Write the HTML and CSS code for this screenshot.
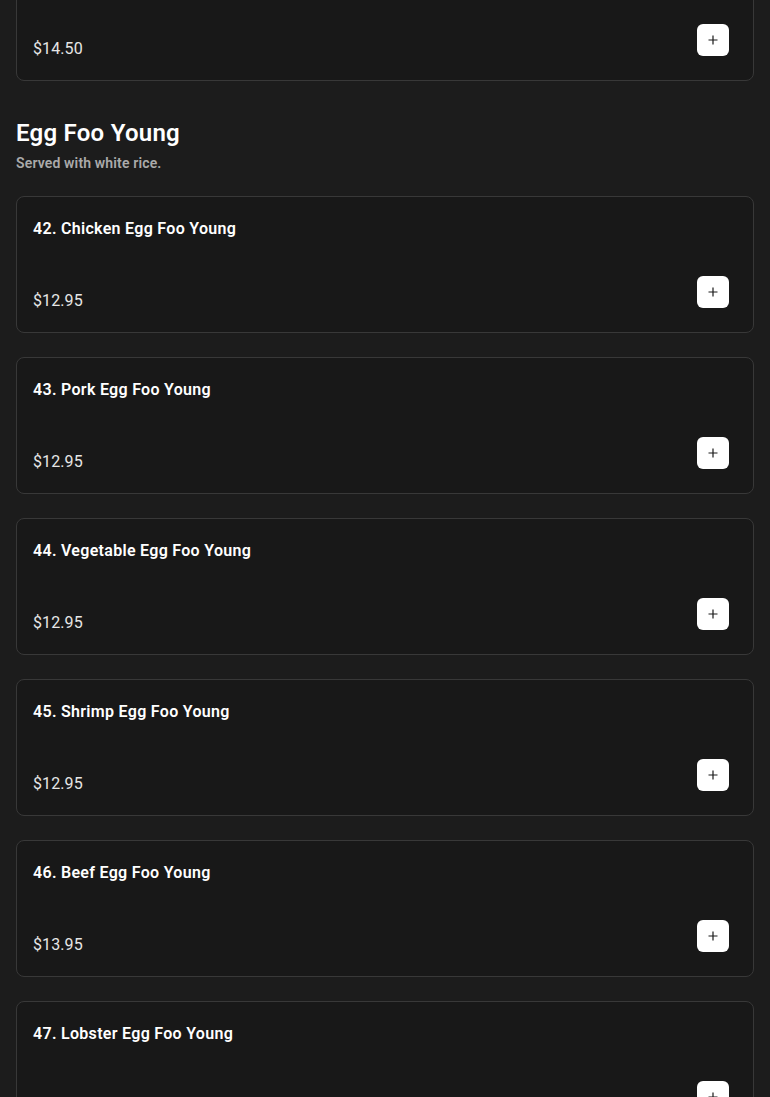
FILE: index.html
```html
<!DOCTYPE html>
<html lang="en">
<head>
<meta charset="utf-8">
<title>Menu - Egg Foo Young</title>
<link rel="stylesheet" href="styles.css">
</head>
<body>
<main class="menu">
  <div class="item-list prev-list">
    <article class="item">
      <h3 class="item-name">41. Shrimp Chow Mein</h3>
      <div class="item-foot">
        <span class="item-price">$14.50</span>
        <button class="add-btn" aria-label="Add"><svg viewBox="0 0 12 12" width="12" height="12"><path d="M6 1.5v9M1.5 6h9" stroke="#1a1a1a" stroke-width="1.2" fill="none"/></svg></button>
      </div>
    </article>
  </div>

  <section class="section">
    <header class="section-head">
      <h2 class="section-title">Egg Foo Young</h2>
      <p class="section-sub">Served with white rice.</p>
    </header>
    <div class="item-list">
      <article class="item">
        <h3 class="item-name">42. Chicken Egg Foo Young</h3>
        <div class="item-foot">
          <span class="item-price">$12.95</span>
          <button class="add-btn" aria-label="Add"><svg viewBox="0 0 12 12" width="12" height="12"><path d="M6 1.5v9M1.5 6h9" stroke="#1a1a1a" stroke-width="1.2" fill="none"/></svg></button>
        </div>
      </article>
      <article class="item">
        <h3 class="item-name">43. Pork Egg Foo Young</h3>
        <div class="item-foot">
          <span class="item-price">$12.95</span>
          <button class="add-btn" aria-label="Add"><svg viewBox="0 0 12 12" width="12" height="12"><path d="M6 1.5v9M1.5 6h9" stroke="#1a1a1a" stroke-width="1.2" fill="none"/></svg></button>
        </div>
      </article>
      <article class="item">
        <h3 class="item-name">44. Vegetable Egg Foo Young</h3>
        <div class="item-foot">
          <span class="item-price">$12.95</span>
          <button class="add-btn" aria-label="Add"><svg viewBox="0 0 12 12" width="12" height="12"><path d="M6 1.5v9M1.5 6h9" stroke="#1a1a1a" stroke-width="1.2" fill="none"/></svg></button>
        </div>
      </article>
      <article class="item">
        <h3 class="item-name">45. Shrimp Egg Foo Young</h3>
        <div class="item-foot">
          <span class="item-price">$12.95</span>
          <button class="add-btn" aria-label="Add"><svg viewBox="0 0 12 12" width="12" height="12"><path d="M6 1.5v9M1.5 6h9" stroke="#1a1a1a" stroke-width="1.2" fill="none"/></svg></button>
        </div>
      </article>
      <article class="item">
        <h3 class="item-name">46. Beef Egg Foo Young</h3>
        <div class="item-foot">
          <span class="item-price">$13.95</span>
          <button class="add-btn" aria-label="Add"><svg viewBox="0 0 12 12" width="12" height="12"><path d="M6 1.5v9M1.5 6h9" stroke="#1a1a1a" stroke-width="1.2" fill="none"/></svg></button>
        </div>
      </article>
      <article class="item">
        <h3 class="item-name">47. Lobster Egg Foo Young</h3>
        <div class="item-foot">
          <span class="item-price">$15.95</span>
          <button class="add-btn" aria-label="Add"><svg viewBox="0 0 12 12" width="12" height="12"><path d="M6 1.5v9M1.5 6h9" stroke="#1a1a1a" stroke-width="1.2" fill="none"/></svg></button>
        </div>
      </article>
    </div>
  </section>
</main>
</body>
</html>
```
FILE: styles.css
```css
html, body {
  margin: 0;
  padding: 0;
  background: #1c1c1c;
}
body {
  font-family: Roboto, "Liberation Sans", Arial, sans-serif;
  color: #ffffff;
  overflow: hidden;
}
.menu {
  padding: 0 16px;
  margin-top: -56px;
}
.item-list {
  display: flex;
  flex-direction: column;
  gap: 24px;
}
.item {
  background: #181818;
  border: 1px solid #383838;
  border-radius: 8px;
  padding: 20px 24px 24px 16px;
  display: flex;
  flex-direction: column;
}
.item-name {
  margin: 0;
  font-size: 16px;
  line-height: 24px;
  font-weight: 600;
  letter-spacing: 0.3px;
  color: #ffffff;
}
.item-foot {
  margin-top: 35px;
  display: flex;
  justify-content: space-between;
  align-items: flex-end;
}
.item-price {
  font-size: 16px;
  line-height: 20px;
  margin-bottom: -3px;
  font-weight: 400;
  letter-spacing: 0.1px;
  color: #e6e6e6;
}
.add-btn {
  width: 32px;
  height: 32px;
  border: none;
  border-radius: 6px;
  background: #ffffff;
  padding: 0;
  display: flex;
  align-items: center;
  justify-content: center;
  cursor: pointer;
}
.add-btn svg {
  display: block;
}
.section-head {
  margin-top: 36px;
  margin-bottom: 23px;
}
.section-title {
  margin: 0;
  font-size: 24px;
  line-height: 32px;
  font-weight: 600;
  letter-spacing: 0.25px;
  color: #ffffff;
}
.section-sub {
  margin: 4px 0 0;
  font-size: 14px;
  line-height: 20px;
  font-weight: 600;
  letter-spacing: 0.15px;
  color: #aaaaaa;
}
```
